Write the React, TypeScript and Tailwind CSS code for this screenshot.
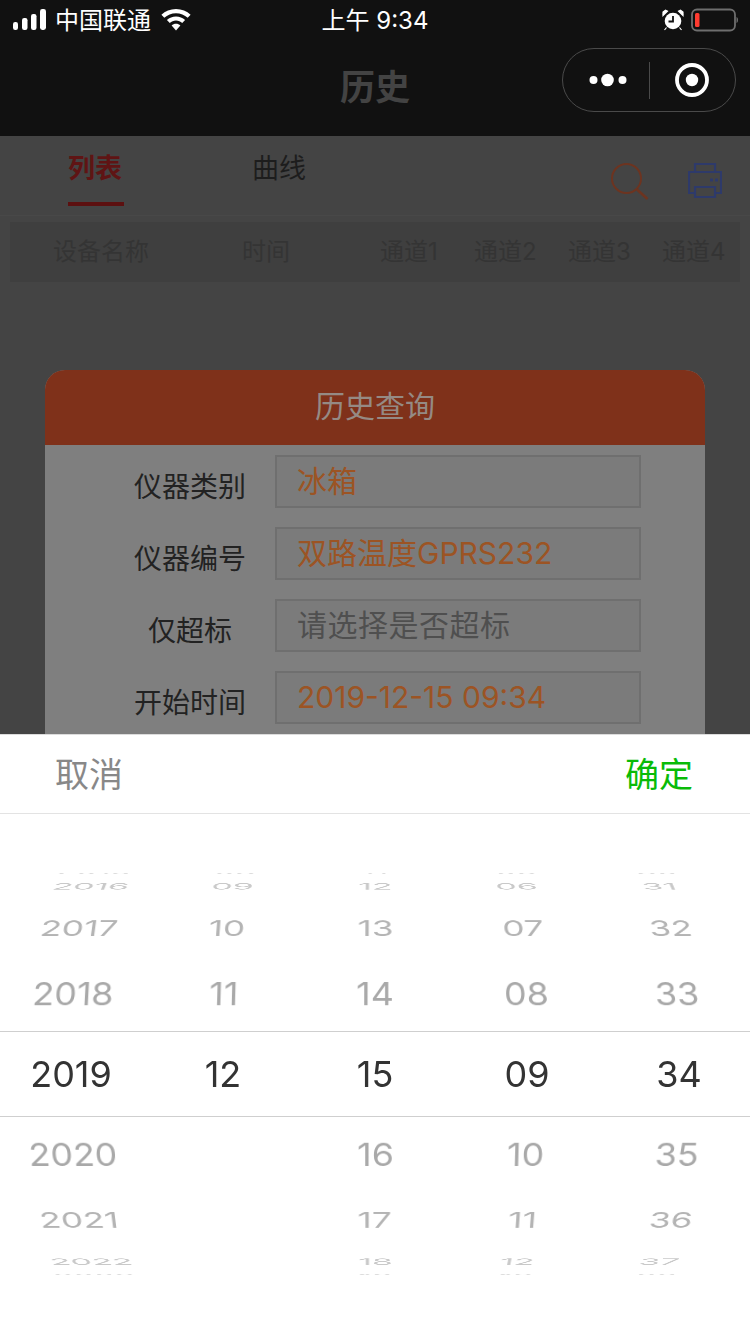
const cjk = "font-['Inter','Noto_Sans_CJK_SC',sans-serif]"

// one class per slot of the wheel, from top to bottom
const slots = [
  '[transform:translate3d(0,-218px,-200px)_rotateX(80deg)] text-[#dddddd]',
  '[transform:translate3d(0,-201px,-170px)_rotateX(70deg)] text-[#c9c9c9]',
  '[transform:translate3d(0,-150px,-68px)_rotateX(48deg)] text-[#b4b4b4]',
  '[transform:translate3d(0,-81px,-18px)_rotateX(24deg)] text-[#a9a9a9]',
  'text-[#333333]',
  '[transform:translate3d(0,81px,-18px)_rotateX(-24deg)] text-[#a9a9a9]',
  '[transform:translate3d(0,150px,-68px)_rotateX(-48deg)] text-[#b4b4b4]',
  '[transform:translate3d(0,201px,-170px)_rotateX(-70deg)] text-[#c9c9c9]',
  '[transform:translate3d(0,218px,-200px)_rotateX(-80deg)] text-[#dddddd]',
]

const wheels = [
  ['2015', '2016', '2017', '2018', '2019', '2020', '2021', '2022', '2023'],
  ['08', '09', '10', '11', '12', '', '', '', ''],
  ['11', '12', '13', '14', '15', '16', '17', '18', '19'],
  ['05', '06', '07', '08', '09', '10', '11', '12', '13'],
  ['30', '31', '32', '33', '34', '35', '36', '37', '38'],
]

const fields = [
  { label: '仪器类别', value: '冰箱', color: 'text-[#9c5424]' },
  { label: '仪器编号', value: '双路温度GPRS232', color: 'text-[#9c5424]' },
  { label: '仅超标', value: '请选择是否超标', color: 'text-[#4f4f4f] tracking-[0.5px]' },
  { label: '开始时间', value: '2019-12-15 09:34', color: 'text-[#9c5424]' },
]

const channels = ['通道1', '通道2', '通道3', '通道4']

function StatusBar() {
  return (
    <div className="relative flex h-10 items-center pl-[13px] pr-3 text-white">
      <svg width="33" height="22" viewBox="0 0 33 22" fill="#fff">
        <rect x="0" y="13" width="5" height="8" rx="2.2" />
        <rect x="9" y="9" width="5.5" height="12" rx="2.2" />
        <rect x="18" y="5" width="5.5" height="16" rx="2.2" />
        <rect x="27" y="0" width="6" height="21" rx="2.4" />
      </svg>
      <span className="ml-[9px] mt-px text-[24px] leading-none">中国联通</span>
      <svg className="ml-[10px]" width="30" height="22" viewBox="0 0 30 22" fill="#fff">
        <path d="M15 0C9.3 0 4.2 2.2.4 5.8l2.9 3C6.4 5.9 10.5 4.2 15 4.2s8.6 1.7 11.7 4.6l2.9-3C25.8 2.2 20.7 0 15 0z" />
        <path d="M15 7.4c-3.5 0-6.7 1.4-9.1 3.6l2.9 3c1.6-1.5 3.8-2.4 6.2-2.4s4.6.9 6.2 2.4l2.9-3C21.7 8.8 18.5 7.4 15 7.4z" />
        <path d="M15 14.8c-1.7 0-3.2.6-4.4 1.7L15 21.5l4.4-5c-1.2-1.1-2.7-1.7-4.4-1.7z" />
      </svg>
      <span className="absolute left-0 right-0 mt-px text-center text-[24px] leading-none">上午 9:34</span>
      <div className="ml-auto flex items-center">
        <svg width="22" height="22" viewBox="0 0 22 22">
          <circle cx="11" cy="12" r="8.3" fill="#fff" />
          <path d="M11 7v5.5H6.500" fill="none" stroke="#111" strokeWidth="1.8" />
          <path d="M1 6.500 5.500 2.200 3.500 1.200 1 3zM21 6.500 16.500 2.200 18.500 1.200 21 3zM4.500 18.500 2.500 21M17.500 18.500l2 2.500" fill="#fff" stroke="#fff" strokeWidth="1.2" />
        </svg>
        <svg className="ml-[7px]" width="47" height="24" viewBox="0 0 47 24">
          <rect x="1" y="1.5" width="43" height="21" rx="5" fill="none" stroke="#6e6e6e" strokeWidth="1.8" />
          <rect x="4" y="5" width="4.5" height="14" rx="1.5" fill="#ff3b30" />
          <path d="M45.500 9c1 .3 1.500 1.500 1.500 3s-.5 2.700-1.500 3z" fill="#6e6e6e" />
        </svg>
      </div>
    </div>
  )
}

function NavBar() {
  return (
    <div className="relative flex h-24 items-start justify-center">
      <h1 className="mt-[25px] text-[35px] leading-[44px] font-bold text-[#434343]">历史</h1>
      <div className="absolute left-[562px] top-2 flex h-16 w-[174px] items-center rounded-full border border-[#4a4a4a]">
        <svg className="ml-[25px]" width="40" height="16" viewBox="0 0 40 16" fill="#fff">
          <circle cx="5.5" cy="8" r="4" />
          <circle cx="19.5" cy="8" r="6.3" />
          <circle cx="34.5" cy="8" r="4" />
        </svg>
        <div className="ml-[21px] h-[37px] w-px bg-[#4a4a4a]" />
        <svg className="ml-[25px]" width="34" height="34" viewBox="0 0 34 34">
          <circle cx="17" cy="17" r="15" fill="none" stroke="#fff" strokeWidth="3.8" />
          <circle cx="17" cy="17" r="6.2" fill="#fff" />
        </svg>
      </div>
    </div>
  )
}

function Tabs() {
  return (
    <div className="relative flex h-[80px] border-b border-[#484848]">
      <div className="ml-[68px] flex w-14 flex-col">
        <span className="mt-[15px] text-[27px] leading-[36px] font-bold text-[#5f1414]">列表</span>
        <div className="mt-[15px] h-1 w-14 bg-[#5c1010]" />
      </div>
      <span className="ml-[128px] mt-[15px] text-[27px] leading-[36px] text-[#1d1d1d]">曲线</span>
      <div className="ml-auto mr-7 mt-[27px] flex items-start gap-[39px]">
        <svg width="38" height="37" viewBox="0 0 38 37" fill="none" stroke="#6d3420" strokeWidth="2">
          <circle cx="15.5" cy="15.5" r="14.5" />
          <path d="M26 26.500 36.500 36" strokeWidth="2.600" />
        </svg>
        <svg width="34" height="35" viewBox="0 0 34 35" fill="none" stroke="#2e3a6a" strokeWidth="2.2">
          <path d="M7 9V1h20v8M7 30H1V9h32v21h-6" />
          <path d="M7 24h20v10H7z" />
          <path d="M22 17h3M27 17h3" strokeWidth="3" />
        </svg>
      </div>
    </div>
  )
}

function TableHead() {
  return (
    <div className="mx-[10px] mt-[6px] flex h-[60px] items-center bg-[#3f3f3f] text-[24px] text-[#343434]">
      <span className="ml-[43px]">设备名称</span>
      <span className="ml-[93px]">时间</span>
      <div className="ml-[90px] flex gap-[33px]">
        {channels.map((c) => (
          <span key={c} className="w-[61px] whitespace-nowrap">{c}</span>
        ))}
      </div>
    </div>
  )
}

function QueryModal() {
  return (
    <div className="absolute left-[45px] top-[370px] h-[400px] w-[660px] overflow-hidden rounded-t-[20px] bg-[#7f7f7f]">
      <div className="flex h-[75px] items-center justify-center bg-[#7f311a] pb-[3px] text-[30px] text-[#958a84]">历史查询</div>
      <div className="mt-[10px] flex flex-col gap-[19px]">
        {fields.map((f) => (
          <div key={f.label} className="flex">
            <span className="h-[53px] w-[230px] pl-[60px] pt-3 text-center text-[28px] leading-[41px] whitespace-nowrap text-[#222222]">{f.label}</span>
            <div className={`flex h-[53px] w-[366px] items-center border-2 border-[#6f6f6f] bg-[#7b7b7b] pb-px pl-5 text-[30px] ${f.color}`}>
              {f.value}
            </div>
          </div>
        ))}
      </div>
    </div>
  )
}

function DatePicker() {
  return (
    <div className="absolute bottom-0 left-0 right-0 h-[600px] border-t border-[#dcdcdc] bg-white">
      <div className="flex h-[79px] items-center justify-between border-b border-[#e3e3e3] pl-[55px] pr-[57px] text-[34px]">
        <span className="text-[#888888]">取消</span>
        <span className="text-[#09bb07]">确定</span>
      </div>
      <div className="relative mt-[59px] h-[402px] overflow-hidden [perspective:2400px] [perspective-origin:50%_50%]">
        <div className="absolute left-0 right-0 top-[158px] h-[86px] border-y border-[#cfcfcf]" />
        <div className="-mx-[5px] grid h-full grid-cols-5 transform-3d">
          {wheels.map((rows, w) => (
            <div key={w} className="grid place-items-center transform-3d">
              {rows.map((text, i) =>
                text ? (
                  <span
                    key={i}
                    className={`[grid-area:1/1] font-['Inter',sans-serif] text-[36px] leading-10 ${slots[i]}`}
                  >
                    {text}
                  </span>
                ) : null,
              )}
            </div>
          ))}
        </div>
      </div>
    </div>
  )
}

export default function App() {
  return (
    <div className={`relative h-[1334px] w-[750px] overflow-hidden bg-[#444444] ${cjk}`}>
      <div className="bg-[#111111]">
        <StatusBar />
        <NavBar />
      </div>
      <Tabs />
      <TableHead />
      <QueryModal />
      <DatePicker />
    </div>
  )
}
